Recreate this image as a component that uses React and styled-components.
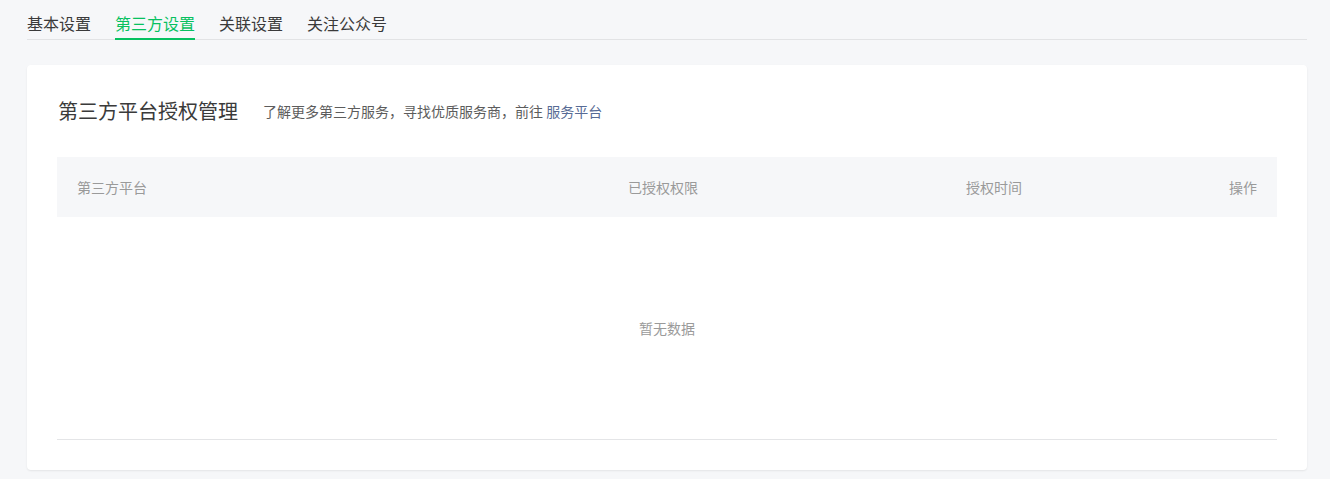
import styled, { createGlobalStyle } from "styled-components";

const GlobalStyle = createGlobalStyle`
  html, body {
    margin: 0;
    padding: 0;
    background: #f6f7f9;
    font-family: "Noto Sans CJK SC", "Noto Sans", sans-serif;
  }
`;

const tabs = ["基本设置", "第三方设置", "关联设置", "关注公众号"];
const columns = ["第三方平台", "已授权权限", "授权时间", "操作"];

export default function App() {
  return (
    <>
      <GlobalStyle />
      <Page>
        <TabBar>
          {tabs.map((t, i) => (
            <Tab key={t} $active={i === 1}>
              {t}
            </Tab>
          ))}
        </TabBar>
        <Card>
          <Heading>
            <Title>第三方平台授权管理</Title>
            <Tip>
              了解更多第三方服务，寻找优质服务商，前往 <Link>服务平台</Link>
            </Tip>
          </Heading>
          <Table>
            <HeadRow>
              {columns.map((c, i) => (
                <HeadCell key={c} $right={i === columns.length - 1}>
                  {c}
                </HeadCell>
              ))}
            </HeadRow>
            <Empty>暂无数据</Empty>
          </Table>
        </Card>
      </Page>
    </>
  );
}

const Page = styled.div`
  padding: 0 23px 10px 27px;
`;

const TabBar = styled.div`
  display: flex;
  gap: 24px;
  border-bottom: 1px solid #e2e3e5;
  height: 40px;
  box-sizing: border-box;
  padding-top: 10px;
`;

const Tab = styled.div`
  font-size: 16px;
  line-height: 26px;
  height: 30px;
  box-sizing: border-box;
  color: ${(p) => (p.$active ? "#07c160" : "#3a3a3a")};
  border-bottom: 2px solid ${(p) => (p.$active ? "#07c160" : "transparent")};
`;

const Card = styled.div`
  margin-top: 25px;
  background: #fff;
  border-radius: 4px;
  box-shadow: 0 1px 2px rgba(0, 0, 0, 0.08);
  padding: 30px;
`;

const Heading = styled.div`
  display: flex;
  align-items: center;
  height: 32px;
  margin-bottom: 30px;
`;

const Title = styled.div`
  font-size: 20px;
  color: #3a3a3a;
  margin-left: 1px;
  margin-top: -2px;
`;

const Tip = styled.div`
  margin-left: 25px;
  font-size: 14px;
  color: #5c5c5c;
`;

const Link = styled.span`
  color: #576b95;
`;

const Table = styled.div`
  border-bottom: 1px solid #e4e5e7;
`;

const HeadRow = styled.div`
  display: grid;
  grid-template-columns: 551px 338px 1fr 120px;
  align-items: center;
  height: 60px;
  background: #f6f7f9;
  padding: 0 20px;
`;

const HeadCell = styled.div`
  font-size: 14px;
  color: #9a9a9a;
  text-align: ${(p) => (p.$right ? "right" : "left")};
`;

const Empty = styled.div`
  height: 222px;
  display: flex;
  align-items: center;
  justify-content: center;
  font-size: 14px;
  color: #9a9a9a;
`;
